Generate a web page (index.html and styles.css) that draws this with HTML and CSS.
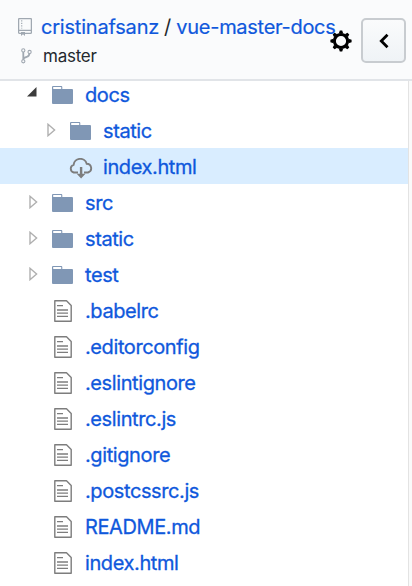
FILE: index.html
```html
<!DOCTYPE html>
<html lang="en">
<head>
<meta charset="utf-8">
<title>vue-master-docs</title>
<link rel="stylesheet" href="styles.css">
</head>
<body>
<svg class="symbols" aria-hidden="true">
  <symbol id="folder" viewBox="0 0 21 18"><path fill="#8097b5" fill-rule="evenodd" d="M1 0h8.4Q10.3 0 10.3 1.2V3H20Q21 3 21 4v13Q21 18 20 18H1Q0 18 0 17V1.2Q0 0 1 0ZM1.2 1.1V3H9.2V1.1Z"/></symbol>
  <symbol id="file" viewBox="0 0 18 22"><path fill="none" stroke="#7d7d7d" stroke-width="1.4" stroke-linejoin="round" d="M.8.8H12.5L17.2 5.5V21.2H.8Z"/><path fill="none" stroke="#7d7d7d" stroke-width="1.3" d="M3 5.7H9M3 10H14M3 13.2H14M3 16.4H14"/></symbol>
  <symbol id="arrow" viewBox="0 0 9 14"><path fill="#fff" stroke="#b0b0b0" stroke-width="1.4" d="M1 1.3 7.6 7 1 12.7Z"/></symbol>
</svg>
<header class="header">
  <div class="heading">
    <div class="repo">
      <svg class="repo-icon" width="14" height="18" viewBox="0 0 14 18"><path fill="none" stroke="#a0a8b1" stroke-width="1.3" d="M3 15.3H1.4Q.6 15.3.6 14.5V1.4Q.6.6 1.4.6H12.6Q13.4.6 13.4 1.4v13.1Q13.4 15.3 12.6 15.3H7M.6 12.4H13.4"/><path stroke="#a0a8b1" stroke-width="1.2" stroke-dasharray="1.2 1.3" d="M3.7 2.3V10.5"/><path fill="#a0a8b1" d="M3 14H7V18L5 16.3 3 18Z"/></svg>
      <a class="owner">cristinafsanz</a><span class="slash">/</span><a class="name">vue-master-docs</a>
    </div>
    <div class="branch">
      <svg class="branch-icon" width="11" height="16" viewBox="0 0 11 16"><g fill="none" stroke="#a0a8b1"><path stroke-width="1.8" d="M2.3 4V12M2.3 11Q3 9.5 5.5 9 8.4 8.3 8.5 5"/><g stroke-width="1.1" fill="#fafbfc"><circle cx="2.3" cy="2.4" r="1.6"/><circle cx="8.6" cy="4" r="1.6"/><circle cx="2.3" cy="13.3" r="1.6"/></g></g></svg>
      <span class="branch-name">master</span>
    </div>
  </div>
  <svg class="gear" width="22" height="22" viewBox="-11 -11 22 22"><circle r="6.6" fill="none" stroke="#000" stroke-width="3"/><path d="M-2.2-7.5-1.2-10.6H1.2L2.2-7.5ZM-2.2 7.5-1.2 10.6H1.2L2.2 7.5ZM-7.5-2.2-10.6-1.2V1.2L-7.5 2.2ZM7.5-2.2 10.6-1.2V1.2L7.5 2.2Z"/><path transform="rotate(45)" d="M-2.2-7.5-1.3-10.4H1.3L2.2-7.5ZM-2.2 7.5-1.3 10.4H1.3L2.2 7.5ZM-7.5-2.2-10.4-1.3V1.3L-7.5 2.2ZM7.5-2.2 10.4-1.3V1.3L7.5 2.2Z"/></svg>
  <button class="toggle" aria-label="Collapse"><svg width="10" height="16" viewBox="0 0 10 16"><path fill="none" stroke="#000" stroke-width="2.8" d="M8.5 1.8 2.3 8 8.5 14.2"/></svg></button>
</header>
<main class="tree">
  <div class="row"><svg class="arrow open" viewBox="0 0 10 10"><path fill="#3c3c3c" d="M9.5 0V9.5H0Z"/></svg><svg class="folder"><use href="#folder"/></svg><a>docs</a></div>
  <div class="row nested"><svg class="arrow"><use href="#arrow"/></svg><svg class="folder"><use href="#folder"/></svg><a>static</a></div>
  <div class="row nested selected"><svg class="cloud" viewBox="0 0 24 21"><path fill="none" stroke="#7d7d7d" stroke-width="1.9" d="M9 14.5H4.8A4 4 0 0 1 4.6 6.8 6.7 6.7 0 0 1 17.7 5.7 4.5 4.5 0 0 1 19 14.5H15"/><path fill="#7d7d7d" d="M10.9 9h2.4v6.8h3.2L12.1 20.6 7.7 15.8h3.2Z"/></svg><a>index.html</a></div>
  <div class="row"><svg class="arrow"><use href="#arrow"/></svg><svg class="folder"><use href="#folder"/></svg><a>src</a></div>
  <div class="row"><svg class="arrow"><use href="#arrow"/></svg><svg class="folder"><use href="#folder"/></svg><a>static</a></div>
  <div class="row"><svg class="arrow"><use href="#arrow"/></svg><svg class="folder"><use href="#folder"/></svg><a>test</a></div>
  <div class="row"><svg class="file"><use href="#file"/></svg><a>.babelrc</a></div>
  <div class="row"><svg class="file"><use href="#file"/></svg><a>.editorconfig</a></div>
  <div class="row"><svg class="file"><use href="#file"/></svg><a>.eslintignore</a></div>
  <div class="row"><svg class="file"><use href="#file"/></svg><a>.eslintrc.js</a></div>
  <div class="row"><svg class="file"><use href="#file"/></svg><a>.gitignore</a></div>
  <div class="row"><svg class="file"><use href="#file"/></svg><a>.postcssrc.js</a></div>
  <div class="row"><svg class="file"><use href="#file"/></svg><a>README.md</a></div>
  <div class="row"><svg class="file"><use href="#file"/></svg><a>index.html</a></div>
</main>
</body>
</html>
```
FILE: styles.css
```css
* { box-sizing: border-box; }
body {
  margin: 0;
  height: 586px;
  overflow: hidden;
  display: flex;
  flex-direction: column;
  background: #fafafa;
  font-family: Inter, "Liberation Sans", sans-serif;
  color: #24292e;
}
.symbols { display: none; }
svg { display: block; flex: none; }
a { color: #0f58dc; }

.header {
  display: flex;
  flex: none;
  position: relative;
  z-index: 1;
  height: 81px;
  padding-left: 18px;
  background: #fafbfc;
  border-bottom: 2px solid #e1e4e8;
}
.heading { width: 312px; padding-top: 14px; white-space: nowrap; }
.repo { display: flex; height: 26px; font-size: 20px; line-height: 27px; }
.repo a { -webkit-text-stroke: 0.2px #0f58dc; }
.repo-icon { margin: 4px 9px 0 0; }
.owner { letter-spacing: -0.2px; }
.slash { margin: 0 5px 0 5px; }
.name { letter-spacing: -0.28px; }
.branch { display: flex; margin-top: 5px; height: 22px; font-size: 17px; line-height: 23px; }
.branch-name { letter-spacing: -0.25px; }
.branch-icon { margin: 3px 11px 0 3px; }
.gear { margin-top: 30px; }
.toggle {
  display: flex;
  align-items: center;
  justify-content: center;
  width: 45px;
  height: 45px;
  margin: 18px 0 0 9px;
  padding: 0;
  border: 2px solid #c8ccd0;
  border-radius: 5px;
  background: linear-gradient(#fafbfc, #eff3f6);
}

.tree {
  flex: 1;
  width: 409px;
  margin-top: -5px;
  background: #fff;
  border-right: 1px solid #e3e3e3;
}
.row {
  display: flex;
  height: 36px;
  padding-left: 29px;
  font-size: 20px;
  line-height: 38px;
  letter-spacing: -0.4px;
  white-space: nowrap;
}
.row a { -webkit-text-stroke: 0.3px #0f58dc; }
.nested { padding-left: 47px; }
.selected { background: #d9edff; }
.arrow { width: 9px; height: 14px; margin: 11px 14px 0 0; }
.arrow.open { width: 10px; height: 10px; margin: 11px 15px 0 -2px; }
.folder { width: 21px; height: 18px; margin: 10px 12px 0 0; }
.file { width: 18px; height: 22px; margin: 8px 13px 0 25px; }
.cloud { width: 24px; height: 21px; margin: 10px 10px 0 22px; }
```
